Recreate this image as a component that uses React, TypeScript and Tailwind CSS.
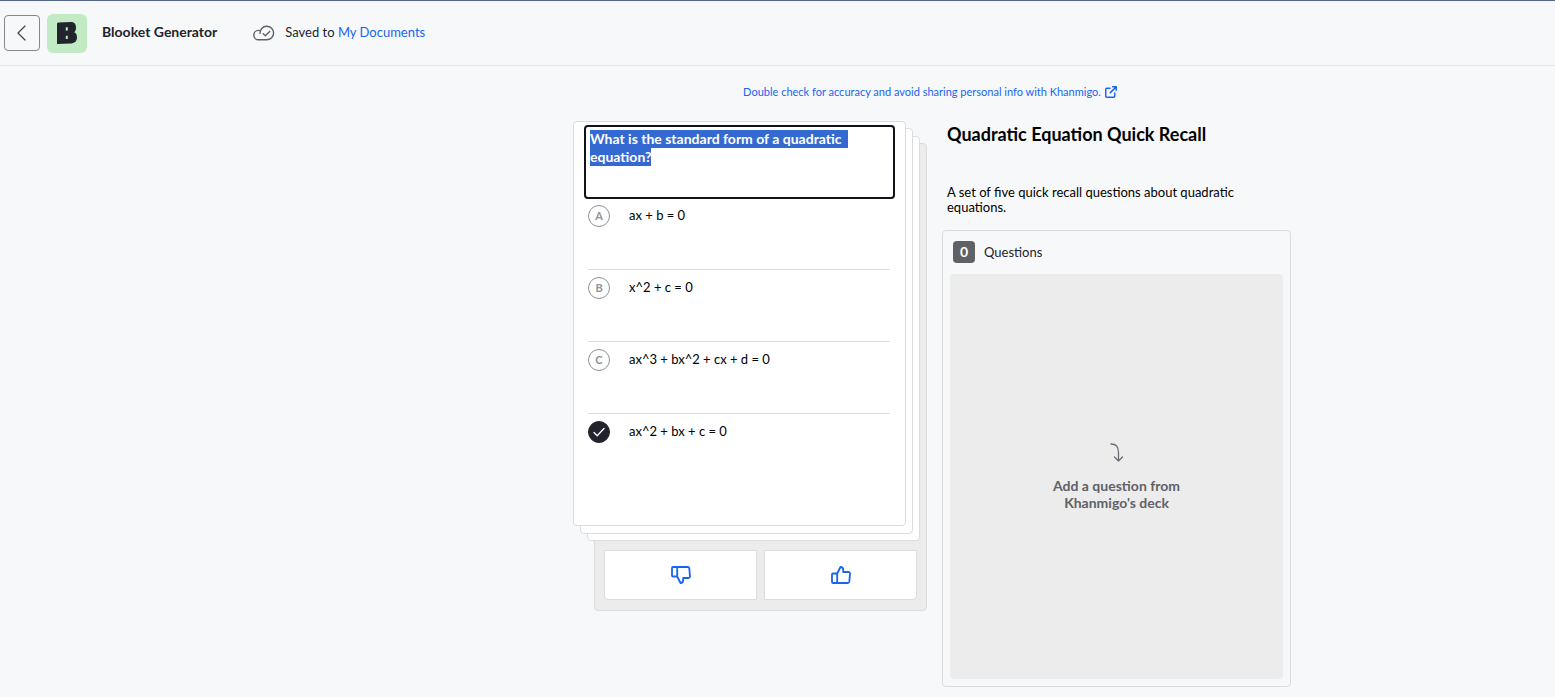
import { useEffect, useRef } from "react";

type Answer = { letter: string; text: string };

const answers: Answer[] = [
  { letter: "A", text: "ax + b = 0" },
  { letter: "B", text: "x^2 + c = 0" },
  { letter: "C", text: "ax^3 + bx^2 + cx + d = 0" },
  { letter: "D", text: "ax^2 + bx + c = 0" },
];

function ChevronLeft() {
  return (
    <svg viewBox="0 0 16 16" className="size-4" fill="none" stroke="#44464d" strokeWidth="1.3" strokeLinecap="round" strokeLinejoin="round" aria-hidden="true">
      <path d="M11 1 4 8l7 7" />
    </svg>
  );
}

function BlookMark() {
  return (
    <svg viewBox="0 0 20 24" className="h-6 w-5" aria-hidden="true">
      <path fill="#21242c" d="M1 1.600 14 1c3.400 0 5 2.200 5 5.400 0 2.200-.6 3.900-1.800 4.900 1.800.9 2.800 2.400 2.800 5 0 4.200-2.600 6.200-6.800 6.300L0 23V2.400Z" />
      <path fill="#c2ebc5" d="M8.800 6.600l1.800-.6.400 3.200-2.200.6zM8.800 14.900l1.800-.4.400 3.200-2.200.4z" />
    </svg>
  );
}

function CloudCheck() {
  return (
    <svg viewBox="0 0 22 16" className="h-4 w-[22px]" fill="none" stroke="#5f6168" strokeWidth="1.4" strokeLinecap="round" strokeLinejoin="round" aria-hidden="true">
      <path d="M7 8.400C7 4.200 9.900 1.200 13.700 1.200c3.900 0 6.900 3 6.900 6.700 0 3.800-3 6.900-6.900 6.900H5.500c-2.700 0-4.700-2-4.700-4.600 0-2.700 2.100-4.800 4.700-4.800.8 0 1.400.1 2 .4" />
      <path d="m10.200 8.700 2.200 2.100 4.300-4.300" />
    </svg>
  );
}

function ExternalLink() {
  return (
    <svg viewBox="0 0 13 13" className="size-3" fill="none" stroke="#1865f2" strokeWidth="1.6" strokeLinecap="round" strokeLinejoin="round" aria-hidden="true">
      <path d="M5.500 2.500H1.800c-.6 0-1 .4-1 1v7.700c0 .6.400 1 1 1h7.700c.6 0 1-.4 1-1V7.500M8.300.8h3.900v3.900M12 1 5.800 7.200" />
    </svg>
  );
}

function ThumbUp({ className }: { className?: string }) {
  return (
    <svg viewBox="0 0 20 18" className={className} fill="none" stroke="#1865f2" strokeWidth="1.8" strokeLinecap="round" strokeLinejoin="round" aria-hidden="true">
      <path d="M6.200 7.500H2c-.6 0-1 .4-1 1V16c0 .6.400 1 1 1h14.800c.8 0 1.400-.6 1.500-1.300l.7-8c.1-.9-.6-1.700-1.500-1.700h-5.300V4c0-1.700-1-3-2.700-3L6.200 7.500V17" />
    </svg>
  );
}

function CurvedArrow() {
  return (
    <svg viewBox="0 0 14 20" className="h-5 w-3.5" fill="none" stroke="#6b6d73" strokeWidth="1.3" strokeLinecap="round" strokeLinejoin="round" aria-hidden="true">
      <path d="M1 1c5 0 7.500 3 7.500 8.500V18M4.500 14l4 4 4-4" />
    </svg>
  );
}

function Header() {
  return (
    <header className="flex h-[66px] items-center border-t border-b border-t-[#56658c] border-b-[#e5e6e9] pl-1">
      <button type="button" aria-label="Back" className="flex size-9 items-center justify-center rounded-sm border border-[#85878d]">
        <ChevronLeft />
      </button>
      <span className="ml-[7px] flex h-[39px] w-10 items-center justify-center rounded-md bg-[#c2ebc5]">
        <BlookMark />
      </span>
      <h1 className="ml-[15px] pb-0.5 text-[14px] leading-5 font-bold">Blooket Generator</h1>
      <div className="ml-9 flex items-center gap-2.5 text-[13px] leading-5">
        <CloudCheck />
        <p className="pb-0.5">
          Saved to{" "}
          <a href="#documents" className="text-[#1865f2]">My Documents</a>
        </p>
      </div>
    </header>
  );
}

function QuestionCard() {
  const question = useRef<HTMLTextAreaElement>(null);

  useEffect(() => {
    question.current?.focus();
    question.current?.select();
  }, []);

  return (
    <section className="z-30 col-start-1 row-start-1 mr-[21px] mb-[85px] rounded-sm border border-[#dbdcdd] bg-white px-2.5 pt-[3px] pb-[39px]">
      <textarea
        ref={question}
        aria-label="Question"
        defaultValue="What is the standard form of a quadratic equation?"
        className="block h-[74px] w-full resize-none rounded-sm border-2 border-[#111318] p-1 pt-[3px] text-[14px] leading-[18px] font-bold outline-none selection:bg-[#3367d1]/99 selection:text-white"
      />
      <div role="group" aria-label="Answers" className="-mt-px pr-[5px] pl-1">
        {answers.map(({ letter, text }) => (
          <div key={letter} className="flex h-18 items-start gap-4 border-b border-[#dbdcdd] pt-[7px] last:border-b-0">
            <label className="relative flex size-[22px] shrink-0 items-center justify-center rounded-full border border-[#909298] text-[11px] leading-4 font-bold text-[#909298] has-checked:border-[#21242c] has-checked:bg-[#21242c]">
              <input type="radio" name="correct" defaultChecked={letter === "D"} aria-label={"Answer " + letter + " is correct"} className="absolute inset-0 appearance-none rounded-full" />
              {letter === "D" ? (
                <svg viewBox="0 0 12 10" className="h-2.5 w-3" fill="none" stroke="white" strokeWidth="1.3" strokeLinecap="round" strokeLinejoin="round" aria-hidden="true">
                  <path d="m1 5.500 3.200 3.200L11 1.500" />
                </svg>
              ) : (
                letter
              )}
            </label>
            <input
              type="text"
              aria-label={"Answer " + letter}
              defaultValue={text}
              className="h-5 min-w-0 flex-1 px-[3px] text-[13px] leading-5 text-black"
            />
          </div>
        ))}
      </div>
    </section>
  );
}

function Deck() {
  return (
    <div className="grid w-[354px] shrink-0">
      <div className="z-0 col-start-1 row-start-1 mt-[22px] ml-[21px] flex items-end gap-[7px] rounded-sm border border-[#dbdcdd] bg-[#ececec] px-[9px] pb-2.5">
        <button type="button" aria-label="Reject question" className="flex h-[50px] flex-1 items-center justify-center rounded-bl-sm border border-[#dbdcdd] bg-white">
          <ThumbUp className="h-[18px] w-5 -scale-y-100" />
        </button>
        <button type="button" aria-label="Accept question" className="flex h-[50px] flex-1 items-center justify-center rounded-br-sm border border-[#dbdcdd] bg-white">
          <ThumbUp className="h-[18px] w-5" />
        </button>
      </div>
      <div className="z-10 col-start-1 row-start-1 mt-[15px] mr-[7px] mb-[70px] ml-3.5 rounded-sm border border-[#dbdcdd] bg-white" />
      <div className="z-20 col-start-1 row-start-1 mt-[7px] mr-3.5 mb-[77px] ml-[7px] rounded-sm border border-[#dbdcdd] bg-white" />
      <QuestionCard />
    </div>
  );
}

function QuestionSet() {
  return (
    <section className="flex w-[349px] flex-col">
      <input
        type="text"
        aria-label="Title"
        defaultValue="Quadratic Equation Quick Recall"
        className="h-[26px] px-[5px] text-[18px] leading-6 font-bold text-black"
      />
      <textarea
        aria-label="Description"
        defaultValue="A set of five quick recall questions about quadratic equations."
        className="mt-[38px] h-[45px] resize-none pr-10 pl-[5px] text-[13px] leading-[15px] text-black"
      />
      <div className="flex flex-1 flex-col rounded-sm border border-[#dbdcdd] px-[7px] pb-[7px]">
        <div className="flex items-center gap-[9px] px-[3px] pt-2.5 pb-[11px]">
          <span className="flex size-[22px] items-center justify-center rounded-sm bg-[#5f6167] text-[14px] leading-5 font-bold text-white">0</span>
          <h2 className="text-[13px] leading-5">Questions</h2>
        </div>
        <div className="flex min-h-[405px] flex-1 flex-col items-center justify-center gap-3.5 rounded-sm bg-[#ececec]">
          <CurvedArrow />
          <p className="w-36 text-center text-[14px] leading-[17px] font-bold text-[#5f6167]">Add a question from Khanmigo's deck</p>
        </div>
      </div>
    </section>
  );
}

export default function App() {
  return (
    <div className="min-h-screen bg-[#f7f8fa] font-['Lato',sans-serif] text-[#21242c]">
      <Header />
      <main className="flex flex-col items-center pb-2.5 pl-[309px]">
        <a href="#accuracy" className="mt-[18px] flex items-center gap-1 pr-1 text-[11px] leading-4 text-[#1865f2]">
          Double check for accuracy and avoid sharing personal info with Khanmigo.
          <ExternalLink />
        </a>
        <div className="mt-[21px] flex items-start gap-[15px]">
          <Deck />
          <QuestionSet />
        </div>
      </main>
    </div>
  );
}
